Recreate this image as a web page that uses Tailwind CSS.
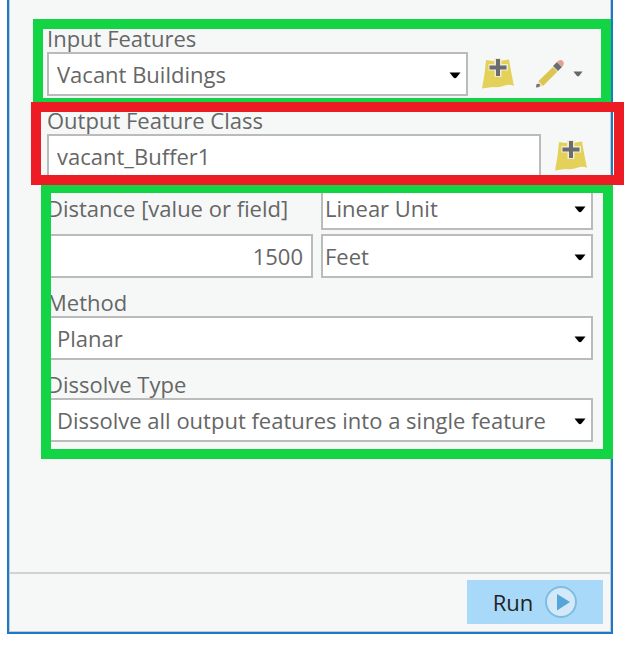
<!DOCTYPE html>
<html lang="en">
<head>
<meta charset="utf-8">
<meta name="viewport" content="width=device-width, initial-scale=1">
<title>Buffer</title>
<script src="https://cdn.jsdelivr.net/npm/@tailwindcss/browser@4"></script>
</head>
<body class="bg-white font-['Open_Sans','Noto_Sans',sans-serif] text-[22px] leading-7 text-[#666]">
<svg class="hidden">
  <symbol id="caret" viewBox="0 0 12 7"><path d="M0.500 0.500H11.500L7.500 5.500Q6 7 4.500 5.500Z" fill="currentColor"/></symbol>
  <symbol id="add-layer" viewBox="0 0 34 32">
    <path d="M5 2Q16 4 28 1.500Q30 14 33 28Q29 26 24 27.500Q18 30 12 29Q6 29.500 1 30.500Q4 16 5 2Z" fill="#e4d15a"/>
    <path d="M13 0H20.500V6H27V12.500H20.500V19H13.500V12.500H7.500V6H13Z" fill="#f1ecd0"/>
    <path d="M15 1H19V7.500H25.500V11.500H19V18H15V11.500H8.500V7.500H15Z" fill="#6b6c70"/>
  </symbol>
</svg>
<main class="flex min-h-screen flex-col pr-[15px] pb-4 pl-[7px]">
  <form class="flex flex-1 flex-col border-x-2 border-b-2 border-[#1979ca] bg-[#f6f8f8]">
    <div class="flex flex-1 flex-col border-x border-b border-[#c9c9c9]">
      <div class="flex flex-1 flex-col pt-6 pr-[17px] pl-[37px]">

        <section class="relative">
          <label for="input" class="block">Input Features</label>
          <div class="flex items-center">
            <div class="relative flex-1">
              <select id="input" class="block h-11 w-full appearance-none border-2 border-[#bbb] bg-white pl-2"><option>Vacant Buildings</option></select>
              <svg class="pointer-events-none absolute top-5 right-[7px] h-[7px] w-3 text-black"><use href="#caret"/></svg>
            </div>
            <button type="button" aria-label="Browse input" class="ml-[13px]"><svg class="h-8 w-[34px]"><use href="#add-layer"/></svg></button>
            <button type="button" aria-label="Edit input" class="ml-5 flex items-center gap-2">
              <svg class="h-[30px] w-[30px]" viewBox="0 0 30 30">
                <path d="M3.500 22L18 8L22.500 12.500L8 27Z" fill="#dcc650"/>
                <path d="M1 28.500L3.500 22L8 27Z" fill="#f3d9bd"/>
                <path d="M1.500 25L5 25L4.500 28L1 28.500Z" fill="#77777a"/>
                <path d="M18 7L22 3L27 8L23 12Z" fill="#6b6c70"/>
                <path d="M22 3Q25 -0.500 28 2Q30 5 27 8Z" fill="#e2a093"/>
              </svg>
              <svg class="h-[6px] w-[10px]"><use href="#caret"/></svg>
            </button>
            <span class="w-[10px]"></span>
          </div>
          <div class="pointer-events-none absolute -top-[5px] -right-[18px] -bottom-3 -left-[14px] border-10 border-[#12d445]"></div>
        </section>

        <section class="relative z-10 mt-[10px]">
          <label for="output" class="block">Output Feature Class</label>
          <div class="flex items-center">
            <input id="output" value="vacant_Buffer1" class="h-11 min-w-0 flex-1 border-2 border-[#bbb] bg-white px-2">
            <button type="button" aria-label="Browse output" class="mr-[5px] ml-[13px]"><svg class="h-8 w-[34px]"><use href="#add-layer"/></svg></button>
          </div>
          <div class="pointer-events-none absolute -top-1 -right-[31px] -bottom-[7px] -left-4 border-10 border-[#ed1c24]"></div>
        </section>

        <section class="relative mt-2 flex flex-col gap-[10px]">
          <div class="grid grid-cols-[266fr_272fr] items-center gap-x-2 gap-y-1">
            <label for="distance" class="whitespace-nowrap">Distance [value or field]</label>
            <div class="relative">
              <select aria-label="Distance type" class="block h-11 w-full appearance-none border-2 border-[#bbb] bg-white pl-[2px]"><option>Linear Unit</option></select>
              <svg class="pointer-events-none absolute top-5 right-[7px] h-[7px] w-3 text-black"><use href="#caret"/></svg>
            </div>
            <input id="distance" value="1500" class="h-11 w-full border-2 border-[#bbb] bg-white px-2 text-right">
            <div class="relative">
              <select aria-label="Unit" class="block h-11 w-full appearance-none border-2 border-[#bbb] bg-white pl-[2px]"><option>Feet</option></select>
              <svg class="pointer-events-none absolute top-5 right-[7px] h-[7px] w-3 text-black"><use href="#caret"/></svg>
            </div>
          </div>
          <div>
            <label for="method" class="block">Method</label>
            <div class="relative">
              <select id="method" class="block h-11 w-full appearance-none border-2 border-[#bbb] bg-white pl-2"><option>Planar</option></select>
              <svg class="pointer-events-none absolute top-5 right-[7px] h-[7px] w-3 text-black"><use href="#caret"/></svg>
            </div>
          </div>
          <div>
            <label for="dissolve" class="block">Dissolve Type</label>
            <div class="relative">
              <select id="dissolve" class="block h-11 w-full appearance-none border-2 border-[#bbb] bg-white pl-2"><option>Dissolve all output features into a single feature</option></select>
              <svg class="pointer-events-none absolute top-5 right-[7px] h-[7px] w-3 text-black"><use href="#caret"/></svg>
            </div>
          </div>
          <div class="pointer-events-none absolute -top-[3px] -right-5 -bottom-[17px] -left-[6px] border-10 border-[#12d445]"></div>
        </section>
      </div>

      <footer class="flex justify-end border-t-2 border-[#d2d2d2] pt-[6px] pr-[7px] pb-[7px]">
        <button type="submit" class="flex h-11 w-[136px] items-center justify-center gap-3 bg-[#a9d9f9] text-[#222]">
          Run
          <svg class="h-8 w-8" viewBox="0 0 32 32"><circle cx="16" cy="16" r="15" fill="#d3e9f8" stroke="#7dbde4" stroke-width="2"/><path d="M12 8L25 16L12 24.500Z" fill="#56a4d8"/></svg>
        </button>
      </footer>
    </div>
  </form>
</main>
</body>
</html>
